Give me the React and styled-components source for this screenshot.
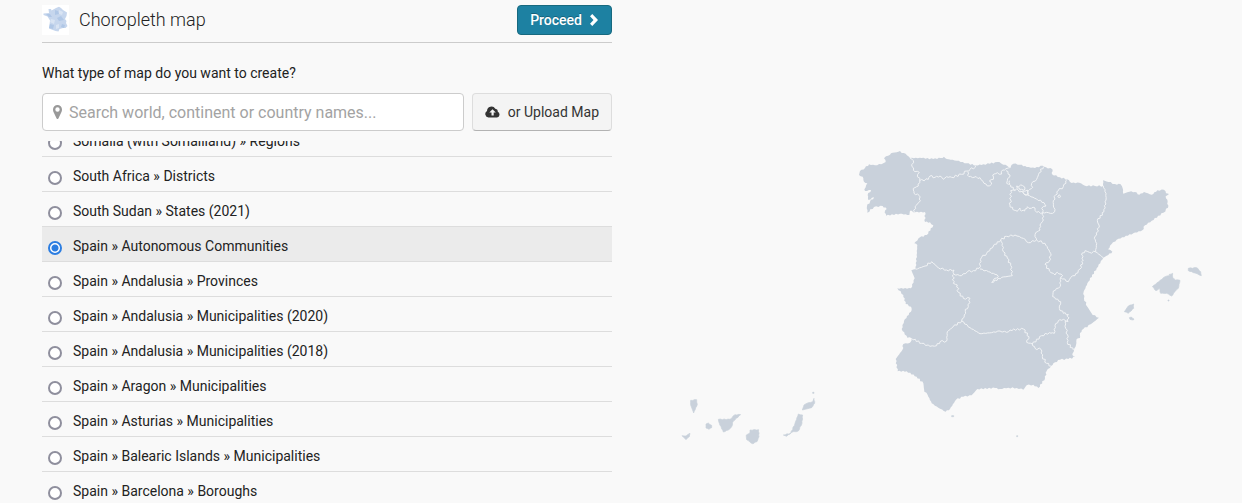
import React, { useLayoutEffect, useRef, useState } from "react";
import styled, { createGlobalStyle } from "styled-components";

const GlobalStyle = createGlobalStyle`
  *, *::before, *::after { box-sizing: border-box; }
  body {
    margin: 0;
    background: #f9f9f9;
    color: #222;
    font: 14px/20px Roboto, "Liberation Sans", sans-serif;
  }
`;

const Page = styled.div`
  display: flex;
  height: 100vh;
  overflow: hidden;
`;

const Panel = styled.main`
  display: flex;
  flex-direction: column;
  flex: 0 1 612px;
  min-width: 0;
  padding-left: 42px;
`;

const Header = styled.header`
  display: flex;
  align-items: center;
  gap: 10px;
  flex: none;
  padding: 5px 0 7px;
  border-bottom: 1px solid #ccc;
`;

const Thumb = styled.svg`
  width: 27px;
  height: 30px;
  background: #fff;
`;

const Title = styled.h1`
  flex: 1;
  margin: 0;
  font-size: 18px;
  line-height: 30px;
  font-weight: 300;
`;

const Icon = styled.svg`
  flex: none;
  width: ${(p) => p.$width}px;
  height: ${(p) => p.$height}px;
  fill: currentColor;
`;

const Button = styled.button`
  display: flex;
  align-items: center;
  justify-content: center;
  gap: 8px;
  border-radius: 4px;
  font: inherit;
  cursor: pointer;
`;

const ProceedButton = styled(Button)`
  height: 30px;
  padding: 0 13px 0 12px;
  border: 1px solid #17697f;
  background: #1d81a2;
  color: #fff;
  font-weight: 500;
  text-shadow: 0 -1px 0 rgba(0, 0, 0, 0.25);
`;

const UploadButton = styled(Button)`
  flex: none;
  padding: 0 12px;
  border: 1px solid #ddd;
  border-bottom-color: #b3b3b3;
  background: #f4f4f4;
  color: #333;
`;

const Question = styled.label`
  flex: none;
  margin: 20px 0 10px;
`;

const SearchRow = styled.div`
  display: flex;
  gap: 8px;
  flex: none;
  height: 38px;
  margin-bottom: 10px;
`;

const SearchBox = styled.div`
  display: flex;
  align-items: center;
  gap: 7px;
  flex: 1;
  min-width: 0;
  padding: 0 10px;
  border: 1px solid #ccc;
  border-radius: 4px;
  background: #fff;
  color: #999;
`;

const SearchInput = styled.input`
  flex: 1;
  min-width: 0;
  border: 0;
  padding: 2px 0 0;
  outline: 0;
  background: none;
  color: #222;
  font: 16px/20px Roboto, "Liberation Sans", sans-serif;
  &::placeholder { color: #a3a3a3; opacity: 1; }
`;

const Options = styled.div`
  flex: 1;
  min-height: 0;
  overflow-y: auto;
  scrollbar-width: none;
`;

const Option = styled.label`
  display: flex;
  align-items: center;
  gap: 11px;
  height: 35px;
  padding: 4px 0 0 6px;
  border-bottom: 1px solid #ddd;
  background: ${(p) => (p.$selected ? "#ebebeb" : "transparent")};
  cursor: pointer;
`;

const Radio = styled.input`
  appearance: none;
  flex: none;
  width: 14px;
  height: 14px;
  margin: 4px 0 0;
  border: 2px solid #8f8f9d;
  border-radius: 50%;
  background: #fff;
  &:checked {
    border-color: #2b7de1;
    background: radial-gradient(circle, #2b7de1 3px, #fff 4px);
  }
`;

const Preview = styled.section`
  flex: 1;
  min-width: 0;
  padding: 140px 32px 0 58px;
`;

const MapDrawing = styled.svg`
  display: block;
  width: 100%;
  fill: #c9d1db;
`;

const maps = [
  "Somalia (with Somaliland) » Regions",
  "South Africa » Districts",
  "South Sudan » States (2021)",
  "Spain » Autonomous Communities",
  "Spain » Andalusia » Provinces",
  "Spain » Andalusia » Municipalities (2020)",
  "Spain » Andalusia » Municipalities (2018)",
  "Spain » Aragon » Municipalities",
  "Spain » Asturias » Municipalities",
  "Spain » Balearic Islands » Municipalities",
  "Spain » Barcelona » Boroughs",
];

const mainland =
  "M567 105L570 93 585 84 597 73 615 76 640 70 647 66 642 55 648 49 660 44 668 38 680 37 690 33 695 39 707 41 720 54 755 54 790 57 812 54 822 50 830 57 860 62 890 70 918 76 940 73 960 71 975 67 988 66 1000 74 1012 78 1022 82 1030 71 1050 74 1070 81 1095 84 1118 77 1128 82 1147 88 1146 103 1170 112 1192 118 1205 129 1228 128 1245 137 1275 138 1300 138 1299 121 1315 126 1335 132 1352 133 1358 145 1360 161 1378 155 1395 156 1408 164 1422 156 1445 164 1462 151 1482 149 1488 160 1497 162 1487 169 1493 185 1494 203 1480 218 1445 242 1425 256 1417 271 1390 280 1340 299 1325 312 1314 328 1327 335 1315 345 1300 353 1280 385 1255 425 1241 455 1242 475 1252 500 1268 525 1287 533 1262 553 1240 567 1230 579 1230 594 1220 597 1218 615 1212 630 1207 645 1216 651 1195 657 1170 659 1155 667 1143 678 1130 693 1125 715 1105 744 1090 734 1070 736 1060 749 1040 744 1015 743 990 747 975 744 922 747 905 766 880 770 858 779 840 807 827 815 805 803 785 790 773 765 763 755 760 730 740 710 710 694 683 694 677 657 697 630 700 612 720 608 725 595 712 593 695 567 702 543 725 510 723 500 707 492 700 465 682 445 723 445 734 415 724 391 737 387 740 345 742 315 733 310 750 292 770 285 790 256 780 247 765 246 765 216 735 217 720 212 718 225 690 221 648 227 644 218 650 207 638 198 612 201 592 218 591 198 600 185 612 172 595 180 593 165 603 150 585 153 583 148 592 130 582 125 578 110Z";

const islands = [
  "M1447 440L1485 410 1498 407 1498 403 1508 400 1508 412 1516 420 1530 421 1525 445 1515 455 1505 468 1490 460 1472 460 1468 445 1458 452Z",
  "M1555 385L1580 383 1592 395 1594 407 1575 399 1555 392Z",
  "M1363 515L1375 498 1391 492 1391 505 1375 520Z",
  "M1378 533L1384 531 1392 537 1390 540 1380 538Z",
  "M36 887L48 888 60 880 58 890 48 899Z",
  "M62 781L80 779 82 793 71 819 62 795Z",
  "M108 852L115 849 125 856 125 863 117 868 108 864Z",
  "M145 838L180 838 195 824 212 824 190 843 185 860 175 870 160 876 148 850Z",
  "M240 870L266 869 267 890 261 905 247 911 230 899 229 885 240 878Z",
  "M340 885L362 880 375 850 385 822 398 825 396 850 385 873 365 877 350 889Z",
  "M397 810L402 795 415 788 428 785 432 775 434 790 425 803 405 808Z",
  "M428 757L432 757 432 760 428 760Z",
  "M845 827L851 827 851 830 845 830Z",
  "M1040 887L1043 887 1043 890 1040 890Z",
  "M1494 480L1497 480 1497 483 1494 483Z",
];

const borders = [
  "M720 54L730 62 726 80 735 95 748 97 743 103 749 122 745 138 730 145 732 160 747 166 751 182 735 200 733 216",
  "M749 122L775 118 780 108 795 112 810 108 820 118 830 110 845 112 875 103 890 93 900 88 915 82 918 76",
  "M892 95L897 110 912 112 930 113 942 130 952 138 965 132 958 123 970 118 968 105 982 98 995 102 998 90 1008 86 1022 82",
  "M1008 92L1020 105 1012 122 1010 130 1020 133 1018 122",
  "M1022 135L1030 148 1045 150 1060 160 1072 165",
  "M1040 138L1058 137 1065 148 1050 150Z",
  "M1058 153L1072 150 1075 162 1062 162Z",
  "M1120 80L1108 98 1100 118 1085 130 1088 142 1075 152 1075 165",
  "M1036 150L1022 152 1022 180 1020 195 1028 208 1042 214 1050 204 1055 213 1064 213 1072 200 1084 205 1095 204 1100 217 1118 218 1115 205 1128 198 1122 188 1100 177 1072 165",
  "M1192 118L1180 140 1165 152 1157 165 1150 182 1150 198 1155 208 1148 220 1135 218 1118 218",
  "M1163 170L1168 164 1172 170Z",
  "M1118 218L1120 240 1110 255 1110 270 1097 278 1095 290 1100 300",
  "M1100 300L1075 308 1060 295 1035 285 1010 289 992 300 970 318 950 340 935 352 933 365 927 385 910 392 892 395 875 407 852 403 852 390 830 390 805 383 785 365 765 378 737 388",
  "M992 300L997 310 1000 335 1012 355 1022 376 1027 407 995 412 965 427 975 415 985 410 975 403 955 395 930 387",
  "M1100 300L1125 310 1142 340 1138 363 1125 373 1138 393 1155 405 1162 397 1178 407 1172 412 1195 425 1202 413 1215 407 1230 387 1240 360 1235 345 1245 332 1258 337 1278 336 1300 353",
  "M1300 138L1308 160 1308 180 1302 215 1282 242 1287 255 1280 285 1273 295 1280 310 1277 335",
  "M1172 412L1170 440 1150 453 1148 470 1172 485 1168 505 1180 520 1195 523 1194 545 1185 545 1187 565 1193 585 1192 607 1210 630",
  "M1190 545L1180 538 1165 542 1155 557 1153 580 1138 578 1115 587 1087 612 1095 625 1113 628 1117 650 1130 670 1143 678",
  "M1087 612L1070 607 1077 590 1060 567 1020 570 1010 577 990 573 965 578 930 581 900 563 875 543",
  "M875 543L850 560 832 575 830 603 810 605 800 617 780 619 755 610 725 595",
  "M875 543L887 520 886 508 895 500 900 475 880 475 865 457 862 435 850 430 850 403",
];

// Adds small bends between the surveyed points so coasts and borders look natural.
function roughen(d, size) {
  const n = d.match(/\d+/g).map(Number);
  const points = [];
  for (let i = 0; i < n.length; i += 2) points.push([n[i], n[i + 1]]);
  const closed = d.endsWith("Z");
  const last = closed ? points.length : points.length - 1;
  let out = `M${points[0].join(" ")}`;
  for (let i = 0; i < last; i++) {
    const [x1, y1] = points[i];
    const [x2, y2] = points[(i + 1) % points.length];
    const length = Math.hypot(x2 - x1, y2 - y1);
    const steps = Math.max(1, Math.round(length / 6));
    for (let s = 1; s < steps; s++) {
      const t = s / steps;
      const wave = Math.sin((x1 + y2 * 3 + s * 37) * 12.9898) * size;
      const x = x1 + (x2 - x1) * t - ((y2 - y1) / length) * wave;
      const y = y1 + (y2 - y1) * t + ((x2 - x1) / length) * wave;
      out += `L${x.toFixed(1)} ${y.toFixed(1)}`;
    }
    out += `L${x2} ${y2}`;
  }
  return closed ? `${out}Z` : out;
}

function SpainMap() {
  return (
    <MapDrawing viewBox="0 0 1620 915" role="img" aria-label="Spain, autonomous communities">
      <path d={roughen(mainland, 2)} />
      {islands.map((d) => <path key={d} d={roughen(d, 1)} stroke="#c9d1db" strokeWidth="2" />)}
      <g fill="none" stroke="#f1f3f5" strokeWidth="3" strokeLinejoin="round">
        {borders.map((d) => <path key={d} d={roughen(d, 3)} />)}
      </g>
    </MapDrawing>
  );
}

function FranceThumb() {
  return (
    <Thumb viewBox="0 0 27 30" aria-hidden="true">
      <path fill="#c6d6ed" d="M14 3l3-1.3 2 1.3 2 2 4 2.500-.5 3.500-1.500 3 1.500 2-.5 2 1.500 3-2 2-2.500 0-3.500 1-1 2.500-3-.5-6.500-2.500.5-4 .5-4-2.500-4-4-1.500 0-1.500 5.500-.5-.5-4 2.500 0 .5 1.500z" />
      <path fill="#b0c7e6" d="M13 5l3 1 1 3-4 1zM4 9l4 0 2 3-3 0zM15 13l4-2 3 4-5 1zM8 19l4 1-1 4-4-1zM20 19l3 1-1 3-3-1z" />
      <path fill="#d9e4f3" d="M17 5l4 2-1 3-3-1zM9 14l4 1-1 4-4-2zM14 20l3-1 0 4-3 1z" />
    </Thumb>
  );
}

export default function App() {
  const [selected, setSelected] = useState(3);
  const list = useRef(null);
  useLayoutEffect(() => {
    list.current.scrollTop = 19;
  }, []);

  return (
    <Page>
      <GlobalStyle />
      <Panel>
        <Header>
          <FranceThumb />
          <Title>Choropleth map</Title>
          <ProceedButton type="button">
            Proceed
            <Icon $width={8} $height={12} viewBox="0 0 8 12" aria-hidden="true">
              <path d="M0 2.300L2.300 0 8 6 2.300 12 0 9.700 3.500 6z" />
            </Icon>
          </ProceedButton>
        </Header>
        <Question htmlFor="map-search">What type of map do you want to create?</Question>
        <SearchRow>
          <SearchBox>
            <Icon $width={9} $height={14} viewBox="0 0 9 14" aria-hidden="true">
              <path fillRule="evenodd" d="M4.500 0A4.500 4.500 0 0 0 0 4.500C0 6 .5 7 1 8l2.600 5.400q.9 1.200 1.800 0L8 8c.5-1 1-2 1-3.500A4.500 4.500 0 0 0 4.500 0zM4.500 2.300a2.200 2.200 0 1 1 0 4.400 2.200 2.200 0 0 1 0-4.400z" />
            </Icon>
            <SearchInput id="map-search" placeholder="Search world, continent or country names..." />
          </SearchBox>
          <UploadButton type="button">
            <Icon $width={15} $height={12} viewBox="0 0 15 12" aria-hidden="true">
              <path fillRule="evenodd" d="M3.500 11.500A3.500 3.500 0 0 1 2 5 4.500 4.500 0 0 1 10.300 2.700 2.600 2.600 0 0 1 12.700 5.800 3 3 0 0 1 12 11.500zM7.500 3.300L4.300 6.600H6.500V9.500H8.700V6.600H10.800z" />
            </Icon>
            or Upload Map
          </UploadButton>
        </SearchRow>
        <Options ref={list} role="radiogroup" aria-label="Map">
          {maps.map((name, i) => (
            <Option key={name} $selected={i === selected}>
              <Radio type="radio" name="map" checked={i === selected} onChange={() => setSelected(i)} />
              {name}
            </Option>
          ))}
        </Options>
      </Panel>
      <Preview>
        <SpainMap />
      </Preview>
    </Page>
  );
}
